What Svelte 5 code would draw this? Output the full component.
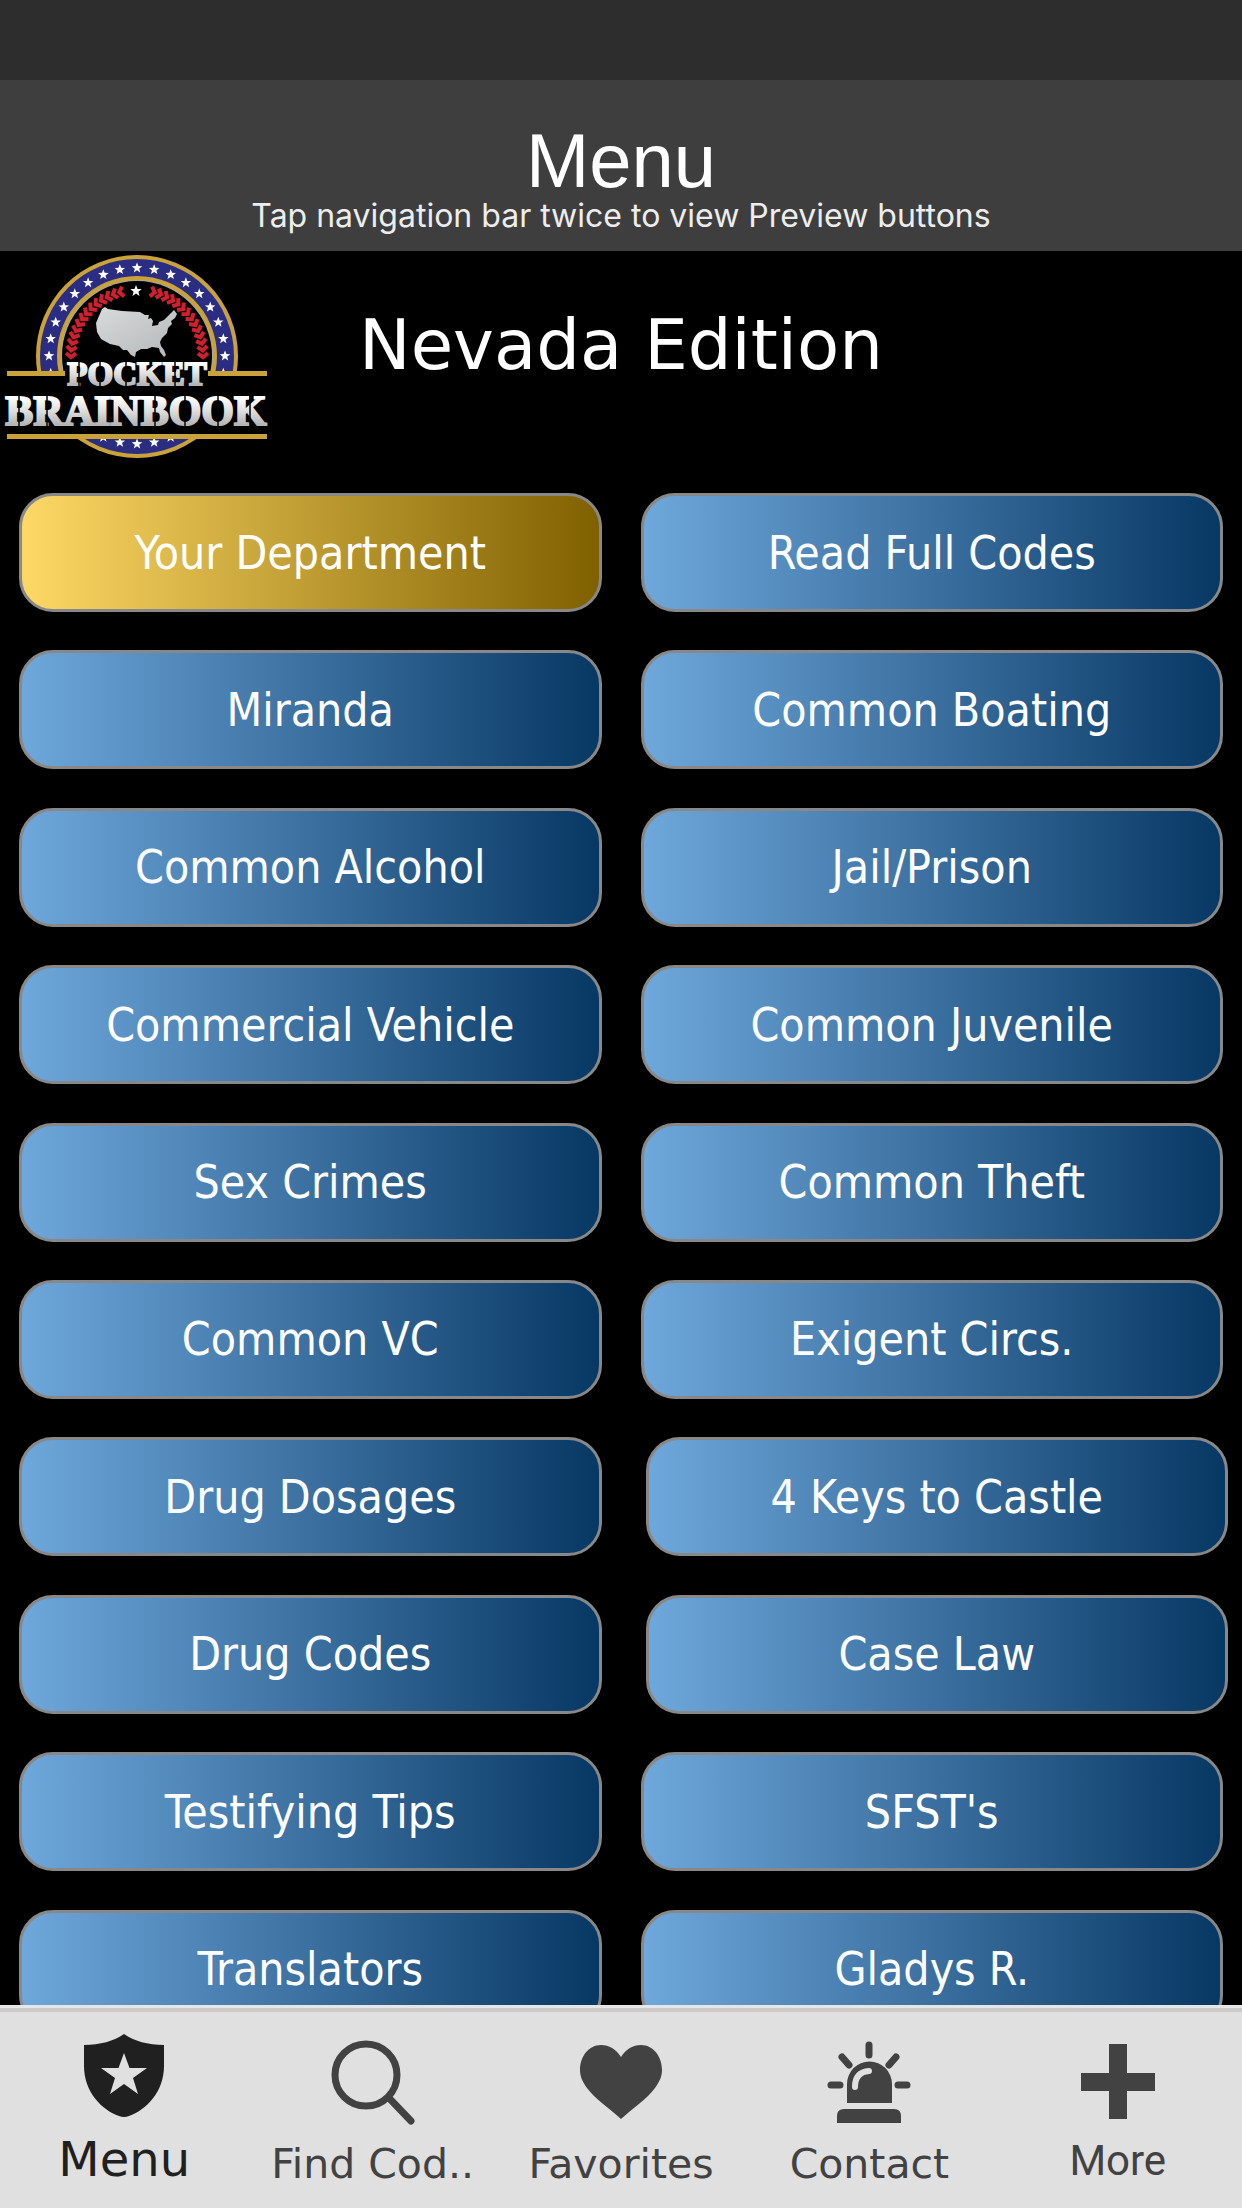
<script>
  const entries = [
    { label: 'Your Department', gold: true },
    { label: 'Read Full Codes' },
    { label: 'Miranda' },
    { label: 'Common Boating' },
    { label: 'Common Alcohol' },
    { label: 'Jail/Prison' },
    { label: 'Commercial Vehicle' },
    { label: 'Common Juvenile' },
    { label: 'Sex Crimes' },
    { label: 'Common Theft' },
    { label: 'Common VC' },
    { label: 'Exigent Circs.' },
    { label: 'Drug Dosages' },
    { label: '4 Keys to Castle', inset: true },
    { label: 'Drug Codes' },
    { label: 'Case Law', inset: true },
    { label: 'Testifying Tips' },
    { label: "SFST's" },
    { label: 'Translators' },
    { label: 'Gladys R.' },
  ];

  const tabs = [
    { label: 'Menu', icon: 'shield', active: true },
    { label: 'Find Cod..', icon: 'search' },
    { label: 'Favorites', icon: 'heart' },
    { label: 'Contact', icon: 'siren' },
    { label: 'More', icon: 'plus' },
  ];

  function star(cx, cy, r) {
    const pts = [];
    for (let i = 0; i < 10; i++) {
      const a = (Math.PI / 5) * i - Math.PI / 2;
      const d = i % 2 ? r * 0.42 : r;
      pts.push(`${(cx + d * Math.cos(a)).toFixed(1)},${(cy + d * Math.sin(a)).toFixed(1)}`);
    }
    return pts.join(' ');
  }

  const onRing = (deg, r) => {
    const a = (deg * Math.PI) / 180;
    return [137 + r * Math.sin(a), 116 - r * Math.cos(a)];
  };

  const topStars = Array.from({ length: 19 }, (_, i) => {
    const [x, y] = onRing((i - 9) * 11.25, 88);
    return star(x, y, 5.5);
  });
  const bottomStars = Array.from({ length: 5 }, (_, i) => {
    const [x, y] = onRing(180 + (i - 2) * 11.25, 88);
    return star(x, y, 5.5);
  });
  const leaves = Array.from({ length: 14 }, (_, i) => 13 + i * 5.8);
</script>

<div class="screen">
  <div class="status"></div>
  <header>
    <h1>Menu</h1>
    <p>Tap navigation bar twice to view Preview buttons</p>
  </header>

  <main>
    <section class="banner">
      <svg class="logo" viewBox="0 11 272 212" role="img" aria-label="Pocket Brainbook">
        <defs>
          <linearGradient id="steel" x1="0" y1="0" x2="0" y2="1">
            <stop offset="0.2" stop-color="#ffffff" />
            <stop offset="0.5" stop-color="#dedede" />
            <stop offset="0.8" stop-color="#b4b4b4" />
          </linearGradient>
          <linearGradient id="land" x1="0" y1="0" x2="1" y2="1">
            <stop offset="0" stop-color="#d8dadb" />
            <stop offset="1" stop-color="#b4b7b9" />
          </linearGradient>
          <clipPath id="upper"><rect x="0" y="0" width="272" height="132" /></clipPath>
          <clipPath id="lower"><rect x="0" y="197" width="272" height="30" /></clipPath>
        </defs>
        <g clip-path="url(#upper)">
          <circle cx="137" cy="116" r="101" fill="#c9a23a" />
          <circle cx="137" cy="116" r="97" fill="#2b2d83" />
          <circle cx="137" cy="116" r="80" fill="#c9a23a" />
          <circle cx="137" cy="116" r="76" fill="#a9a7a0" />
          <circle cx="137" cy="116" r="75" fill="#000" />
          {#each topStars as points}
            <polygon {points} fill="#fff" />
          {/each}
        </g>
        <g clip-path="url(#lower)">
          <circle cx="137" cy="116" r="102" fill="#c9a23a" />
          <circle cx="137" cy="116" r="98" fill="#2b2d83" />
          {#each bottomStars as points}
            <polygon {points} fill="#fff" />
          {/each}
        </g>
        <g fill="none" stroke="#cf2030" stroke-width="4">
          {#each leaves as deg}
            <path d="M132 49l5 4l5-4" transform="rotate({-deg} 137 116) rotate(90 137 50)" />
            <path d="M132 49l5 4l5-4" transform="rotate({deg} 137 116) rotate(-90 137 50)" />
          {/each}
        </g>
        <polygon points={star(136, 51, 6)} fill="#fff" />
        <path
          fill="url(#land)"
          d="M102 69L105 67L108 69L122 71L140 72L145 75L149 75L148 79L151 78L153 81L152 86L158 85L159 82L164 80L168 76L171 73L174 70L177 74L175 78L171 81L172 84L168 88L167 93L162 98L160 102L161 106L164 110L166 115L164 117L160 112L159 108L152 107L147 109L141 109L136 112L135 117L131 115L127 110L123 110L119 106L110 104L101 99L97 92L96 83L99 76z"
        />
        <path fill="#c9a23a" d="M7 131h58v5H7zM208 131h59v5h-59zM7 194h260v5H7z" />
        <g
          font-family="'Liberation Serif', serif"
          font-weight="700"
          text-anchor="middle"
          fill="url(#steel)"
          stroke="url(#steel)"
          stroke-width="2"
        >
          <text x="136" y="185" font-size="42">BRAINBOOK</text>
          <text x="137" y="145" font-size="33">POCKET</text>
        </g>
        <path
          stroke="#050505"
          stroke-width="1.5"
          d="M19 155v33M47 155v33M155 155v33M185 155v33M218 155v33M250 155v33M79 120v28M100 120v28M126 120v28M175 120v28"
        />
      </svg>
      <h2>Nevada Edition</h2>
    </section>

    <section class="grid">
      {#each entries as e}
        <button type="button" class="entry" class:gold={e.gold} class:inset={e.inset}>{e.label}</button>
      {/each}
    </section>
  </main>

  <nav>
    {#each tabs as t}
      <button type="button" class="tab {t.icon}" class:active={t.active}>
        <svg viewBox="-48 0 96 96" aria-hidden="true">
          {#if t.icon === 'shield'}
            <path
              fill="currentColor"
              fill-rule="evenodd"
              d="M0 4C10 11 24 15 40 15V36C40 62 22 80 5 86Q0 88-5 86C-22 80-40 62-40 36V15C-24 15-10 11 0 4zM0 23l-5.5 15H-23L-9 48l-5 16L0 54l14 10-5-16 14-10H5.5z"
            />
          {:else if t.icon === 'search'}
            <g fill="none" stroke="currentColor">
              <circle cx="-7" cy="45" r="31" stroke-width="7" />
              <path d="M17 69L38 91" stroke-width="7" stroke-linecap="round" />
            </g>
          {:else if t.icon === 'heart'}
            <path
              fill="currentColor"
              d="M0 89C-12 78-26 69-34 58C-39 51-41 46-41 40C-41 26-32 15-20 15C-12 15-5 19 0 27C5 19 12 15 20 15C32 15 41 26 41 40C41 46 39 51 34 58C26 69 12 78 0 89z"
            />
          {:else if t.icon === 'siren'}
            <path fill="currentColor" d="M-22 73V54a22.5 22.5 0 0 1 45 0V73zM-32 93v-7q0-7 7-7H25q7 0 7 7v7z" />
            <path
              fill="none"
              stroke="currentColor"
              stroke-width="7"
              stroke-linecap="round"
              d="M0 15v10M-27 27l7 8M27 27l-7 8M-38 55h9M38 55h-9"
            />
            <path fill="none" stroke="#e0e0e0" stroke-width="6" stroke-linecap="round" d="M-14 57Q-14 42 0 41" />
          {:else}
            <path fill="currentColor" d="M-9 14H9V43H37V61H9V89H-9V61H-37V43H-9z" />
          {/if}
        </svg>
        <span>{t.label}</span>
      </button>
    {/each}
  </nav>
</div>

<style>
  :global(body) {
    margin: 0;
    background: #000;
  }
  .screen {
    display: flex;
    flex-direction: column;
    height: 100vh;
    overflow: hidden;
    background: #000;
    color: #fff;
    font-family: 'DejaVu Sans', sans-serif;
  }
  button {
    margin: 0;
    padding: 0;
    border: 0;
    background: none;
    cursor: pointer;
  }
  .status {
    flex: none;
    height: 80px;
    background: #2d2d2d;
  }
  header {
    flex: none;
    box-sizing: border-box;
    height: 171px;
    padding-top: 42px;
    background: #3e3e3e;
    text-align: center;
  }
  h1 {
    margin: 0;
    font: 400 76px/78px 'Liberation Sans', sans-serif;
  }
  p {
    margin: 0;
    font: 400 32px/32px Inter, sans-serif;
    color: #ededed;
  }
  main {
    flex: 1;
    min-height: 0;
    overflow: hidden;
  }
  .banner {
    display: grid;
    grid-template-columns: 1fr auto 1fr;
    align-items: start;
    height: 242px;
  }
  .logo {
    display: block;
    width: 272px;
    height: 212px;
  }
  h2 {
    margin: 0;
    padding-top: 52px;
    font-size: 69px;
    font-weight: 400;
    line-height: 84px;
  }
  .grid {
    display: grid;
    grid-template-columns: 1fr 1fr;
    grid-template-rows: repeat(10, 1fr);
    column-gap: 39px;
    height: 1574px;
    padding: 0 19px;
  }
  .entry {
    box-sizing: border-box;
    height: 119px;
    border: 3px solid #888;
    border-radius: 34px;
    background: linear-gradient(90deg, #6fa8dc, #073763) border-box;
    color: #fff;
    font-family: 'DejaVu Sans Condensed', 'DejaVu Sans', sans-serif;
    font-size: 46px;
    line-height: 56px;
  }
  .entry.gold {
    background: linear-gradient(90deg, #ffd966, #7f6000) border-box;
  }
  .entry.inset {
    margin: 0 -5px 0 5px;
  }
  nav {
    flex: none;
    display: grid;
    grid-template-columns: repeat(5, 1fr);
    box-sizing: border-box;
    height: 203px;
    border-top: 3px solid #e6e6e6;
    box-shadow: inset 0 4px #cbcac8;
    background: #e0e0e0;
  }
  .tab {
    display: flex;
    flex-direction: column;
    align-items: center;
    padding-top: 22px;
    color: #424242;
    font-family: 'DejaVu Sans', sans-serif;
    font-size: 41px;
    line-height: 64px;
    white-space: nowrap;
  }
  .tab svg {
    flex: none;
    width: 96px;
    height: 96px;
    margin-bottom: 6px;
  }
  .tab.active {
    color: #202020;
    font-size: 48px;
    line-height: 54px;
  }
  .tab.plus {
    font-family: Roboto, sans-serif;
    font-size: 42px;
    line-height: 58px;
  }
</style>
